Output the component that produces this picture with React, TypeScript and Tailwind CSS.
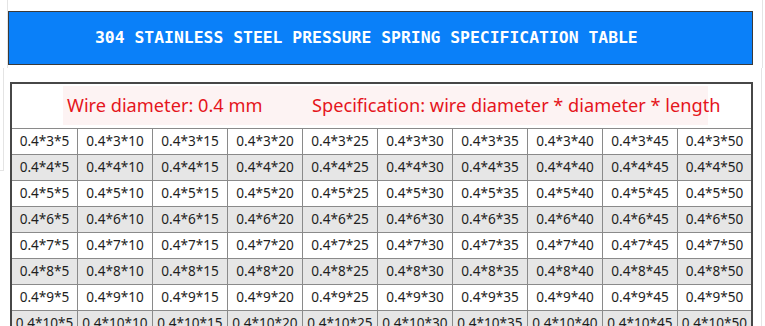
const lengths = [5, 10, 15, 20, 25, 30, 35, 40, 45, 50]
const diameters = [3, 4, 5, 6, 7, 8, 9, 10]

export default function App() {
  return (
    <div className="w-[765px] h-[326px] overflow-hidden bg-white">
      {/* title bar */}
      <div className="ml-[7px] w-[756px] h-[68px] border-x border-[#e4e4e4] pt-[11px]">
        <div
          className="w-[745px] h-[54px] bg-[#0a80f9] border border-[#3a3a3a] flex items-center pl-[86px] text-white text-[16.4px] font-semibold whitespace-nowrap"
          style={{ fontFamily: '"DejaVu Sans Mono", monospace' }}
        >
          304 STAINLESS STEEL PRESSURE SPRING SPECIFICATION TABLE
        </div>
      </div>

      <div className="flex items-start">
        <div className="w-[4px] h-[103px] border-r border-b border-[#e4e4e4]" />

        {/* spec table */}
        <div className="ml-[6px] mt-[14px] w-[743px] border-2 border-[#474747] bg-white">
          <div className="h-[45px] border-b border-[#8a8a8a] pt-[2px]">
            <div
              className="ml-[51px] w-[645px] h-[39px] bg-[#fdf3f3] flex items-center pl-[4px] text-[#e5151c] text-[18.2px] whitespace-nowrap"
              style={{ fontFamily: '"Noto Sans", sans-serif' }}
            >
              <span className="w-[245px] shrink-0">Wire diameter: 0.4 mm</span>
              <span>Specification: wire diameter * diameter * length</span>
            </div>
          </div>

          {diameters.map((d, i) => (
            <div
              key={d}
              className={`flex h-[26px] border-b border-[#8a8a8a] ${i % 2 === 1 ? 'bg-[#e6e6e6]' : 'bg-white'}`}
            >
              {lengths.map((l, j) => (
                <div
                  key={l}
                  className={`flex items-center justify-center shrink-0 text-[13.6px] text-[#1e1e1e] whitespace-nowrap ${
                    j === 0 ? 'w-[66px] border-r' : j === 9 ? 'w-[73px]' : 'w-[75px] border-r'
                  } border-[#8a8a8a]`}
                  style={{ fontFamily: '"Noto Sans", sans-serif' }}
                >
                  0.4*{d}*{l}
                </div>
              ))}
            </div>
          ))}
        </div>

        <div className="ml-[8px] w-px h-[258px] bg-[#e4e4e4]" />
      </div>
    </div>
  )
}
